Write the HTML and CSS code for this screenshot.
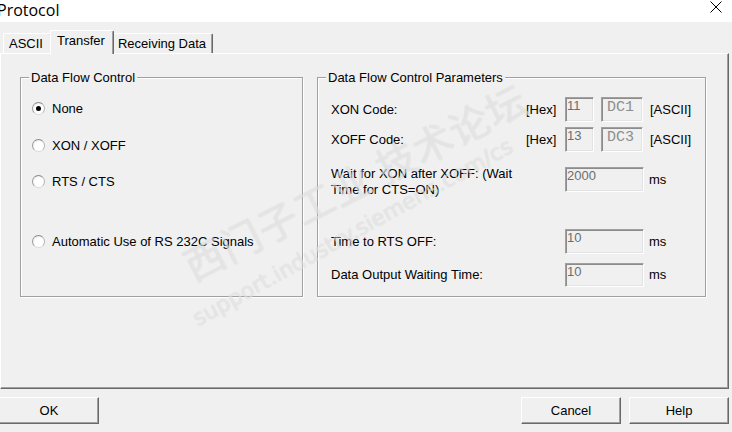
FILE: index.html
```html
<!DOCTYPE html>
<html>
<head>
<meta charset="utf-8">
<title>Protocol</title>
<link rel="stylesheet" href="styles.css">
</head>
<body>
<div class="titlebar">
  <span class="title">Protocol</span>
  <svg class="close" width="12" height="12" viewBox="0 0 12 12"><path d="M0.5 0.5 L11.5 11.5 M11.5 0.5 L0.5 11.5" stroke="#000" stroke-width="1" fill="none"/></svg>
</div>
<div class="tabs">
  <div class="tab tab-ascii">ASCII</div>
  <div class="tab active">Transfer</div>
  <div class="tab tab-recv">Receiving Data</div>
</div>
<div class="panel">
  <div class="group group-left">
    <div class="legend">Data Flow Control</div>
    <div class="radio r1"><span class="dot checked"></span>None</div>
    <div class="radio r2"><span class="dot"></span>XON / XOFF</div>
    <div class="radio r3"><span class="dot"></span>RTS / CTS</div>
    <div class="radio r4"><span class="dot"></span>Automatic Use of RS 232C Signals</div>
  </div>
  <div class="group group-right">
    <div class="legend">Data Flow Control Parameters</div>
    <div class="row row1">
      <span class="lbl">XON Code:</span><span class="hex">[Hex]</span><span class="field f-hex">11</span><span class="field f-asc">DC1</span><span class="unit">[ASCII]</span>
    </div>
    <div class="row row2">
      <span class="lbl">XOFF Code:</span><span class="hex">[Hex]</span><span class="field f-hex">13</span><span class="field f-asc">DC3</span><span class="unit">[ASCII]</span>
    </div>
    <div class="row row3">
      <span class="lbl lbl-wide lbl-wrap">Wait for XON after XOFF: (Wait<br>Time for CTS=ON)</span><span class="field f-num">2000</span><span class="ms">ms</span>
    </div>
    <div class="row row4">
      <span class="lbl lbl-wide">Time to RTS OFF:</span><span class="field f-num">10</span><span class="ms">ms</span>
    </div>
    <div class="row row5">
      <span class="lbl lbl-wide">Data Output Waiting Time:</span><span class="field f-num f-short">10</span><span class="ms">ms</span>
    </div>
  </div>
</div>
<div class="buttons">
  <div class="btn btn-ok">OK</div>
  <div class="btn-group">
    <div class="btn">Cancel</div>
    <div class="btn">Help</div>
  </div>
</div>
<div class="watermark wm-cn">西门子工业 技术论坛</div>
<div class="watermark wm-url">support.industry.siemens.com/cs</div>
</body>
</html>
```
FILE: styles.css
```css
html, body {
  margin: 0;
  padding: 0;
}
body {
  width: 732px;
  height: 432px;
  overflow: hidden;
  background: #f0f0f0;
  font-family: "Liberation Sans", Arial, sans-serif;
  font-size: 13px;
  color: #000;
  position: relative;
}
.titlebar {
  height: 22px;
  background: #fff;
  display: flex;
  justify-content: space-between;
  align-items: flex-start;
}
.title {
  font-family: "Open Sans", sans-serif;
  font-size: 16px;
  line-height: 20px;
  margin-left: -3px;
}
.close {
  margin: 1px 10px 0 0;
}
.tabs {
  height: 31px;
  display: flex;
  align-items: flex-end;
  padding-left: 3px;
}
.tab {
  border-top: 1px solid #fff;
  border-left: 1px solid #fff;
  border-right: 1px solid #696969;
  box-shadow: inset -1px 0 #a0a0a0;
  border-radius: 2px 2px 0 0;
  padding: 2px 8px 2px 5px;
  line-height: 15px;
}
.tab-recv {
  padding: 2px 6px 2px 5px;
}
.tab.active {
  padding: 2px 8px 6px 6px;
  margin: 0 -2px -1px -2px;
  position: relative;
  z-index: 1;
  background: #f0f0f0;
}
.panel {
  width: 729px;
  height: 336px;
  box-sizing: border-box;
  border: 1px solid;
  border-color: #fff #696969 #696969 #fff;
  box-shadow: inset -1px -1px #a0a0a0;
  display: flex;
  align-items: flex-start;
  gap: 14px;
  padding: 23px 0 0 19px;
}
.group {
  box-sizing: border-box;
  height: 220px;
  border: 1px solid #a0a0a0;
  box-shadow: inset 1px 1px #fff, 1px 1px #fff;
  display: flex;
  flex-direction: column;
}
.group-left {
  width: 283px;
}
.group-right {
  width: 389px;
}
.legend {
  align-self: flex-start;
  margin: -8px 0 0 8px;
  padding: 0 2px;
  line-height: 15px;
  background: #f0f0f0;
}
.radio {
  display: flex;
  align-items: center;
  gap: 7px;
  margin-left: 11px;
  height: 15px;
  line-height: 15px;
}
.r1 { margin-top: 16px; }
.r2 { margin-top: 22px; }
.r3 { margin-top: 21px; }
.r4 { margin-top: 45px; }
.dot {
  width: 13px;
  height: 13px;
  box-sizing: border-box;
  border-radius: 50%;
  border: 1px solid;
  border-color: #8a8a8a #b4b4b4 #dadada #9a9a9a;
  background: radial-gradient(circle at 60% 60%, #fff 0, #fff 45%, #e6e6e6 100%);
  display: flex;
  align-items: center;
  justify-content: center;
}
.dot.checked::after {
  content: "";
  width: 5px;
  height: 5px;
  border-radius: 50%;
  background: #000;
}
.row {
  display: flex;
  align-items: center;
  margin-left: 13px;
}
.row1 { margin-top: 12px; }
.row2 { margin-top: 5px; }
.row3 { margin-top: 15px; align-items: flex-start; }
.row4 { margin-top: 31px; }
.row5 { margin-top: 8px; }
.lbl {
  width: 195px;
}
.lbl-wide {
  width: 234px;
}
.lbl-wrap {
  line-height: 16px;
  margin-top: -1px;
}
.hex {
  width: 39px;
}
.field {
  box-sizing: border-box;
  height: 25px;
  border: 1px solid;
  border-color: #a0a0a0 #fff #fff #a0a0a0;
  box-shadow: inset 1px 1px #8c8c8c, inset -1px -1px #e3e3e3;
  color: #6d6d6d;
  line-height: 13px;
  padding: 1px 0 0 1px;
}
.f-hex {
  width: 29px;
}
.f-asc {
  width: 42px;
  margin-left: 7px;
  font-family: "Liberation Mono", monospace;
  font-size: 15px;
  line-height: 16px;
  padding: 2px 0 0 5px;
  color: #8e8e8e;
}
.f-num {
  width: 79px;
}
.f-short {
  height: 24px;
}
.unit {
  margin-left: 7px;
}
.ms {
  margin-left: 5px;
  line-height: 25px;
}
.buttons {
  display: flex;
  justify-content: space-between;
  margin-top: 8px;
  padding-right: 3px;
}
.btn {
  width: 100px;
  height: 27px;
  box-sizing: border-box;
  border: 1px solid;
  border-color: #fff #696969 #696969 #fff;
  box-shadow: inset -1px -1px #a0a0a0;
  display: flex;
  align-items: center;
  justify-content: center;
}
.btn-ok {
  margin-left: -1px;
}
.btn-group {
  display: flex;
  gap: 8px;
}
.watermark {
  position: absolute;
  pointer-events: none;
  white-space: nowrap;
  color: rgba(255, 255, 255, 0.5);
  text-shadow: 0 0 1px rgba(110, 110, 110, 0.3);
}
.wm-cn {
  left: 186px;
  top: 247px;
  font-family: "Noto Sans CJK SC", sans-serif;
  font-size: 40px;
  line-height: 40px;
  letter-spacing: 1px;
  transform: rotate(-27deg);
  transform-origin: 0 50%;
}
.wm-url {
  left: 200px;
  top: 308px;
  font-family: "DejaVu Sans", sans-serif;
  font-size: 22px;
  line-height: 22px;
  transform: rotate(-29deg);
  transform-origin: 0 100%;
}
```
